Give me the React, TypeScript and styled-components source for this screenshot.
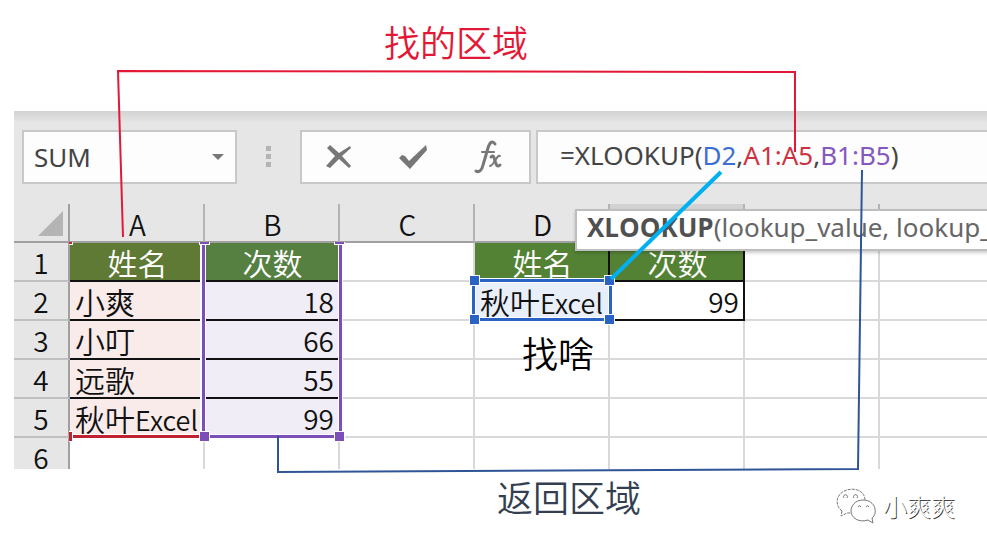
import React from "react";
import styled, { createGlobalStyle, css } from "styled-components";

const Global = createGlobalStyle`
  *, *::before, *::after { box-sizing: border-box; }
  body { margin: 0; background: #fff; overflow: hidden; }
`;

const cjk = `"Noto Sans CJK SC", sans-serif`;
const ui = `"Noto Sans", "Open Sans", sans-serif`;

const Page = styled.main`
  position: relative;
  min-height: 551px;
  padding: 111px 0 82px 14px;
  font-family: ${cjk};
  font-weight: 350;
`;

const Workbook = styled.section`
  position: relative;
  height: 358px;
  overflow: hidden;
  background: linear-gradient(#d2d2d2, #e6e6e6 12px);
`;

const FormulaBar = styled.div`
  display: flex;
  align-items: center;
  height: 93px;
  padding: 0 0 2px 8px;
`;

const Box = styled.div`
  display: flex;
  align-items: center;
  height: 54px;
  background: #fdfdfd;
  border: 2px solid #c8c8c8;
`;

const NameBox = styled(Box)`
  width: 215px;
  padding: 0 10px;
`;

const NameInput = styled.input`
  flex: 1;
  min-width: 0;
  padding: 0;
  border: 0;
  outline: 0;
  background: none;
  color: #444;
  font: 400 26px/36px ${ui};
`;

const PlainButton = styled.button`
  display: flex;
  align-items: center;
  justify-content: center;
  padding: 0;
  border: 0;
  background: none;
  color: #777;
`;

const Grip = styled.div`
  display: flex;
  flex-direction: column;
  gap: 3px;
  width: 63px;
  align-items: center;
`;

const Dot = styled.span`
  width: 5px;
  height: 5px;
  background: #b4b4b4;
`;

const Actions = styled(Box)`
  width: 231px;
  margin-right: 5px;
  padding-right: 4px;
  justify-content: space-around;
`;

const Formula = styled(Box)`
  flex: 1;
  min-width: 0;
  padding: 0 0 4px 22px;
  border-right: 0;
  overflow: hidden;
  white-space: nowrap;
  color: #444;
  font: 400 26px/36px ${ui};
`;

const Ref = styled.span<{ $color: string }>`
  color: ${(p) => p.$color};
`;

const Grid = styled.table`
  width: 100%;
  table-layout: fixed;
  border-collapse: separate;
  border-spacing: 0;
  background: #fff;
  color: #111;

  th:last-child,
  td:last-child { border-right: 0; }
`;

const Col = styled.col<{ $width?: number }>`
  ${(p) => p.$width && `width: ${p.$width}px;`}
`;

const ColHead = styled.th<{ $active?: boolean }>`
  height: 39px;
  padding: 2px 0 0 2px;
  border-bottom: 2px solid #a0a0a0;
  border-right: 2px solid #b4b4b4;
  background: ${(p) => (p.$active ? "#d2d2d2" : "#e6e6e6")};
  font-size: 28px;
  font-weight: 350;
  line-height: 32px;
`;

const Corner = styled(ColHead)`
  border-right-color: #a0a0a0;

  svg { display: block; margin: 0 0 0 22px; }
`;

const RowHead = styled.th`
  height: 39px;
  padding: 0;
  border-right: 2px solid #a0a0a0;
  border-bottom: 2px solid #c0c0c0;
  background: #e6e6e6;
  font-size: 28px;
  font-weight: 350;
  line-height: 36px;
`;

type Kind = "head" | "text" | "number" | "empty";

const Cell = styled.td<{ $kind: Kind; $bg?: string; $framed?: boolean }>`
  height: 39px;
  padding: 0 5px;
  border-right: 2px solid #d9d9d9;
  border-bottom: 2px solid #d9d9d9;
  background: ${(p) => p.$bg || "#fff"};
  font-size: 30px;
  line-height: 36px;
  white-space: nowrap;
  ${(p) => p.$kind === "head" && css`padding: 0 3px 0 5px; color: #fff; text-align: center;`}
  ${(p) => p.$kind === "number" && css`padding-right: 4px; font-size: 28px; text-align: right;`}
  ${(p) => p.$framed && css`border-color: #111;`}
`;

const Latin = styled.span`
  font-size: 27px;
  line-height: 1;
`;

const Ranges = styled.div`
  position: absolute;
  inset: 131px 0 0 55px;
  overflow: hidden;
  pointer-events: none;
`;

const Range = styled.div<{ $x: number; $y: number; $w: number; $h: number; $color: string }>`
  position: absolute;
  left: ${(p) => p.$x}px;
  top: ${(p) => p.$y}px;
  width: ${(p) => p.$w}px;
  height: ${(p) => p.$h}px;
  border: 3px solid ${(p) => p.$color};
  box-shadow: inset 0 0 0 1px #fff, 0 0 0 1px #fff;
`;

const Handle = styled.i<{ $color: string; $at: "tl" | "tr" | "bl" | "br" }>`
  position: absolute;
  width: 11px;
  height: 11px;
  border: 1px solid #fff;
  background: ${(p) => p.$color};
  ${(p) => (p.$at[0] === "t" ? "top: -7px;" : "bottom: -7px;")}
  ${(p) => (p.$at[1] === "l" ? "left: -6px;" : "right: -6px;")}
`;

const Hint = styled.div`
  position: absolute;
  left: 561px;
  right: -4px;
  top: 98px;
  height: 42px;
  padding-left: 10px;
  overflow: hidden;
  border: 2px solid #bebebe;
  background: #fff;
  box-shadow: 0 2px 3px rgba(0, 0, 0, 0.2);
  color: #666;
  font: 400 26px/32px ${ui};
  white-space: nowrap;
`;

const HintName = styled.b`
  color: #505050;
  font-family: "Open Sans", sans-serif;
  line-height: 30px;
`;

const Notes = styled.svg`
  position: absolute;
  left: 0;
  top: 0;
  pointer-events: none;
`;

const Label = styled.p<{ $x: number; $y: number; $color: string }>`
  position: absolute;
  left: ${(p) => p.$x}px;
  top: ${(p) => p.$y}px;
  margin: 0;
  color: ${(p) => p.$color};
  font-size: 36px;
  line-height: 44px;
  white-space: nowrap;
`;

const Signature = styled.footer`
  position: absolute;
  right: 32px;
  bottom: 27px;
  display: flex;
  align-items: center;
  gap: 5px;
  color: #fff;
  font-size: 24px;
  font-weight: 300;
  line-height: 36px;
  text-shadow: 1px 1px 0 #444;
`;

const RED = "#c0222f";
const PURPLE = "#7c4fb8";
const BLUE = "#2a63c4";
const PINK = "#f9ebea";
const LILAC = "#f0edf7";

const people: [string, string, number][] = [
  ["小爽", "", 18],
  ["小叮", "", 66],
  ["远歌", "", 55],
  ["秋叶", "Excel", 99],
];

const Blank = ({ count }: { count: number }) => (
  <>{Array.from({ length: count }, (_, i) => <Cell key={i} $kind="empty" />)}</>
);

export default function App() {
  return (
    <>
      <Global />
      <Page>
        <Workbook>
          <FormulaBar>
            <NameBox>
              <NameInput aria-label="名称框" defaultValue="SUM" />
              <PlainButton aria-label="展开名称">
                <svg width="14" height="8" viewBox="0 0 14 8"><path d="M1 1h12L7 7z" fill="#777" /></svg>
              </PlainButton>
            </NameBox>
            <Grip><Dot /><Dot /><Dot /></Grip>
            <Actions>
              <PlainButton aria-label="取消">
                <svg width="28" height="26" viewBox="0 0 28 26">
                  <path d="M2 4 5 1 14 9 25 2 26 4 17 12 26 22 24 24 14 15 5 24 1 22 10 12z" fill="#777" />
                </svg>
              </PlainButton>
              <PlainButton aria-label="输入">
                <svg width="30" height="26" viewBox="0 0 30 26">
                  <path d="M1 14 4 11 7 12 11 17 28 1 29 6 12 25z" fill="#777" />
                </svg>
              </PlainButton>
              <PlainButton aria-label="插入函数">
                <svg width="28" height="34" viewBox="0 0 28 34" fill="none" stroke="#777" strokeLinecap="round">
                  <path d="M21 4C19 1 16 1 14 8L9 25C8 30 5 33 2 31" strokeWidth="3" />
                  <path d="M8 12H20" strokeWidth="2" />
                  <path d="M17 17C20 14 20 18 21 21S23 28 26 25" strokeWidth="3" />
                  <path d="M26 16C23 14 20 26 16 26" strokeWidth="2" />
                </svg>
              </PlainButton>
            </Actions>
            <Formula>
              =XLOOKUP(<Ref $color="#3c6fd0">D2</Ref>,<Ref $color="#cc3340">A1:A5</Ref>,<Ref $color="#8558c0">B1:B5</Ref>)
            </Formula>
          </FormulaBar>
          <Grid>
            <colgroup>
              <Col $width={56} />
              {[0, 1, 2, 3, 4, 5].map((i) => <Col key={i} $width={135} />)}
              <Col />
            </colgroup>
            <thead>
              <tr>
                <Corner aria-label="全选">
                  <svg width="26" height="26" viewBox="0 0 26 26"><path d="M25 0V25H0z" fill="#b4b4b4" /></svg>
                </Corner>
                {["A", "B", "C", "D"].map((c) => <ColHead key={c} scope="col">{c}</ColHead>)}
                <ColHead $active /><ColHead /><ColHead />
              </tr>
            </thead>
            <tbody>
              <tr>
                <RowHead scope="row">1</RowHead>
                <Cell $kind="head" $bg="#5f7a35" $framed>姓名</Cell>
                <Cell $kind="head" $bg="#568042" $framed>次数</Cell>
                <Blank count={1} />
                <Cell $kind="head" $bg="#548235" $framed>姓名</Cell>
                <Cell $kind="head" $bg="#548235" $framed>次数</Cell>
                <Blank count={2} />
              </tr>
              {people.map(([name, latin, n], i) => (
                <tr key={name}>
                  <RowHead scope="row">{i + 2}</RowHead>
                  <Cell $kind="text" $bg={PINK} $framed>{name}{latin && <Latin>{latin}</Latin>}</Cell>
                  <Cell $kind="number" $bg={LILAC} $framed>{n}</Cell>
                  <Blank count={1} />
                  {i === 0 ? (
                    <>
                      <Cell $kind="text" $bg="#e9eff9" $framed>秋叶<Latin>Excel</Latin></Cell>
                      <Cell $kind="number" $framed>99</Cell>
                      <Blank count={2} />
                    </>
                  ) : (
                    <Blank count={4} />
                  )}
                </tr>
              ))}
              <tr>
                <RowHead scope="row">6</RowHead>
                <Blank count={7} />
              </tr>
            </tbody>
          </Grid>
          <Ranges>
            <Range $x={-4} $y={-4} $w={139} $h={200} $color={RED}>
              <Handle $at="tl" $color={RED} /><Handle $at="bl" $color={RED} />
            </Range>
            <Range $x={133} $y={-4} $w={140} $h={200} $color={PURPLE}>
              <Handle $at="tl" $color={PURPLE} /><Handle $at="tr" $color={PURPLE} />
              <Handle $at="bl" $color={PURPLE} /><Handle $at="br" $color={PURPLE} />
            </Range>
            <Range $x={403} $y={37} $w={140} $h={42} $color={BLUE}>
              <Handle $at="tl" $color={BLUE} /><Handle $at="tr" $color={BLUE} />
              <Handle $at="bl" $color={BLUE} /><Handle $at="br" $color={BLUE} />
            </Range>
          </Ranges>
          <Hint><HintName>XLOOKUP</HintName>(lookup_value, lookup_array</Hint>
        </Workbook>

        <Notes width="987" height="551" viewBox="0 0 987 551" fill="none" aria-hidden="true">
          <path d="M123 237 118 71 795 72V152" stroke="#e31837" strokeWidth="2" />
          <path d="M862 170 858 469 278 472V436" stroke="#2f5597" strokeWidth="2" />
          <path d="M721 172 611 279" stroke="#00b0f0" strokeWidth="4" />
        </Notes>
        <Label $x={384} $y={19} $color="#e31837">找的区域</Label>
        <Label $x={522} $y={330} $color="#000">找啥</Label>
        <Label $x={497} $y={474} $color="#333f50">返回区域</Label>
        <Signature>
          <svg width="42" height="36" viewBox="0 0 42 36" fill="#fff" stroke="#777" strokeWidth="1" aria-hidden="true">
            <path d="M6 23C-2 17 0 5 11 2S29 5 29 12M6 23 5 28 11 25 17 25" strokeDasharray="3 1" />
            <path d="M27 12C19 12 15 18 15 23C15 30 23 35 32 32L37 35 36 30C42 26 40 12 27 12z" />
            <path d="M8 10a2 2 0 1 1 3 0M18 10a2 2 0 1 1 3 0M22 19q2-3 3 0M30 19q2-3 3 0" />
          </svg>
          小爽爽
        </Signature>
      </Page>
    </>
  );
}
